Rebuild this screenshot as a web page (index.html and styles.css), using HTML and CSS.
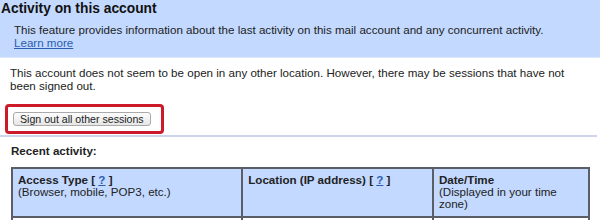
FILE: index.html
```html
<!DOCTYPE html>
<html lang="en">
<head>
    <meta charset="UTF-8">
    <title>Activity on this account</title>
    <link rel="stylesheet" href="styles.css">
</head>
<body>
    <div class="intro">
        <h1>Activity on this account</h1>
        <p class="intro-text">
            This feature provides information about the last activity on this mail account and any concurrent activity.<br>
            <a href="#">Learn more</a>
        </p>
    </div>

    <div class="sessions">
        <p class="status">This account does not seem to be open in any other location. However, there may be sessions that have not been signed out.</p>
        <div class="signout-box">
            <button class="signout-btn">Sign out all other sessions</button>
        </div>
    </div>

    <div class="recent">
        <h2>Recent activity:</h2>
        <table class="activity-table">
            <tr>
                <th class="col-type"><b>Access Type [ <a href="#">?</a> ]</b><br>(Browser, mobile, POP3, etc.)</th>
                <th class="col-location"><b>Location (IP address) [ <a href="#">?</a> ]</b></th>
                <th class="col-date"><b>Date/Time</b><br>(Displayed in your time zone)</th>
            </tr>
            <tr>
                <td></td>
                <td></td>
                <td></td>
            </tr>
        </table>
    </div>
</body>
</html>
```

FILE: styles.css
```css
body {
    margin: 0;
    font-family: "Liberation Sans", Arial, sans-serif;
    font-size: 11.6px;
    color: #222;
    background: #fff;
}
a {
    color: #2a5db0;
}
.intro {
    background-color: #c3d9ff;
    height: 57px;
    border-bottom: 1px solid #dde8fb;
}
.intro h1 {
    margin: 0;
    padding-left: 1px;
    font-size: 13.8px;
    line-height: 17px;
    color: #111;
}
.intro-text {
    margin: 6px 0 0 14px;
    line-height: 13px;
}
.sessions {
    padding: 8px 0 0 10px;
    border-bottom: 2px solid #cdd6e8;
    margin-right: 3px;
    box-sizing: border-box;
    height: 79px;
}
.status {
    margin: 0;
    line-height: 13px;
    width: 575px;
}
.signout-box {
    display: inline-block;
    margin: 12px 0 0 -5px;
    padding: 5px 10px 5px 5px;
    border: 3px solid #cc1a2a;
    border-radius: 4px;
}
.signout-btn {
    font-family: inherit;
    font-size: 10.6px;
    color: #222;
    padding: 1px 6px;
    height: 14px;
    line-height: 11px;
    border: 1px solid #aaa;
    border-radius: 3px;
    background: linear-gradient(#fdfdfd, #e6e6e6);
}
.recent {
    padding: 7px 0 0 11px;
}
.recent h2 {
    margin: 0 0 10px 0;
    font-size: 11.6px;
    line-height: 13px;
}
.activity-table {
    border-collapse: collapse;
    width: 579px;
}
.activity-table th,
.activity-table td {
    border: 2px solid #5a5e66;
    text-align: left;
    vertical-align: top;
    font-weight: normal;
    padding: 5px 5px 4px 5px;
    line-height: 12px;
}
.activity-table th {
    background-color: #c3d9ff;
    height: 38px;
}
.col-type {
    width: 220px;
}
.col-location {
    width: 180px;
}
.col-date {
    width: 145px;
}
.activity-table td {
    height: 30px;
}
```
